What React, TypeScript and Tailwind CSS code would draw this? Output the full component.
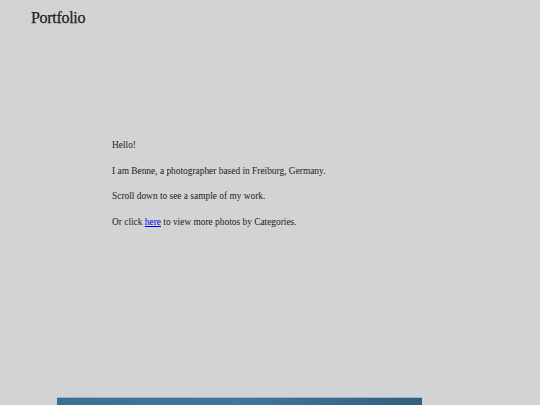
export default function App() {
  return (
    <div className="min-h-screen w-full bg-[#d3d3d3] text-[#1c1c1c] font-['Liberation_Serif',serif] overflow-hidden">
      <header className="pl-[31px] pt-[8px]">
        <h1 className="text-[16px] leading-[20px] tracking-[-0.3px] [-webkit-text-stroke:0.25px_#1c1c1c]">Portfolio</h1>
      </header>

      {/* intro text */}
      <section className="pl-[112px] pt-[111px] text-[9.4px] leading-[13px] space-y-[12.5px]">
        <p>Hello!</p>
        <p>I am Benne, a photographer based in Freiburg, Germany.</p>
        <p>Scroll down to see a sample of my work.</p>
        <p>
          Or click{" "}
          <a href="#" className="text-[#0000ee] underline">
            here
          </a>{" "}
          to view more photos by Categories.
        </p>
      </section>

      {/* first photo of the gallery */}
      <div className="ml-[57px] mt-[168px] w-[365px] h-[40px] border-t border-[#9ab3c8] bg-gradient-to-r from-[#3d6f93] via-[#43769b] to-[#335f80]" />
    </div>
  );
}
